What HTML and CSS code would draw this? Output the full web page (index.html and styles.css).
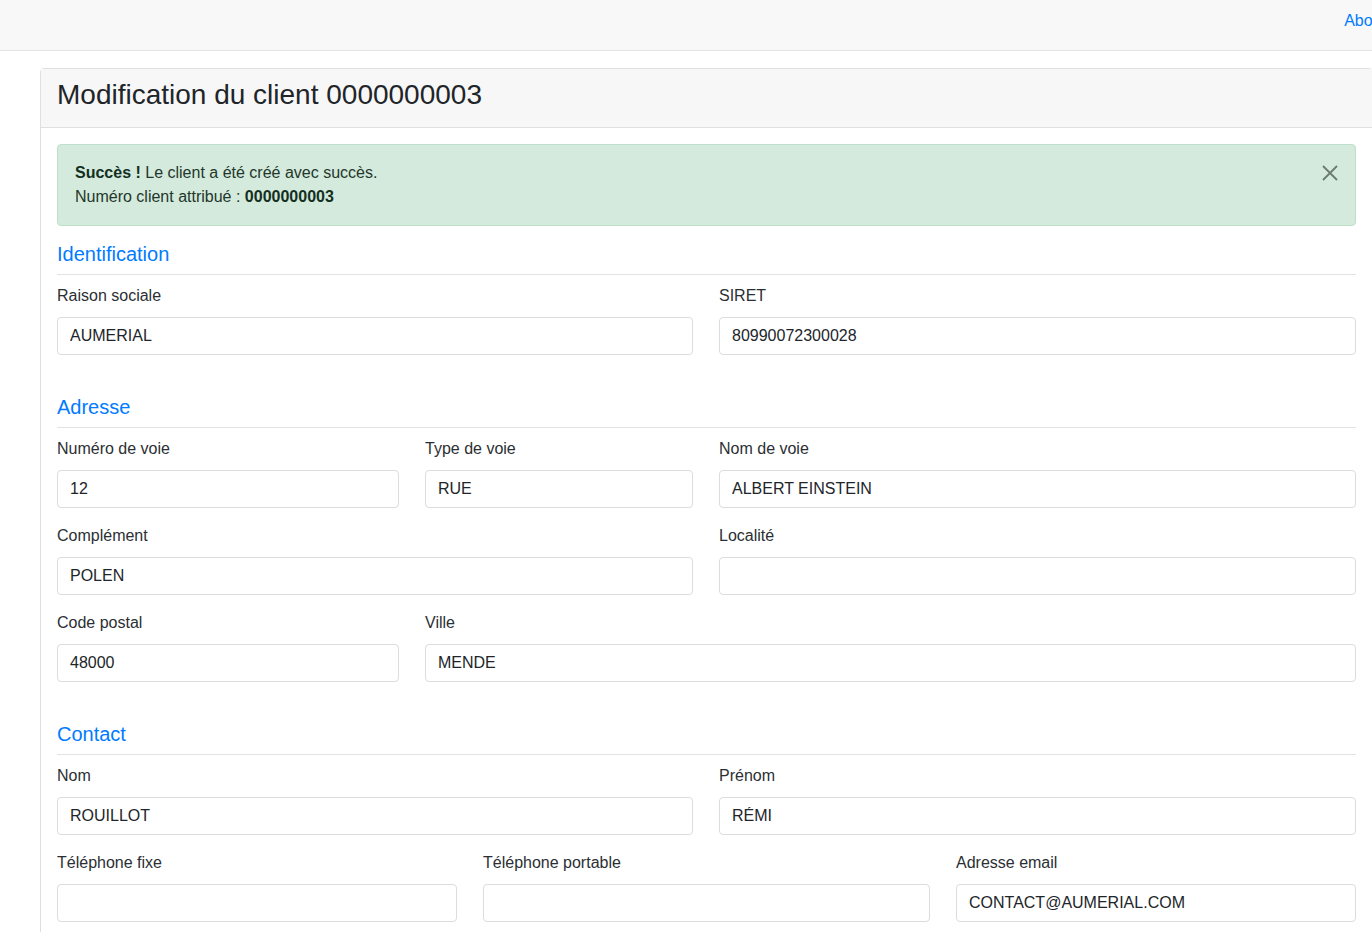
FILE: index.html
```html
<!DOCTYPE html>
<html lang="fr">
<head>
  <meta charset="UTF-8" />
  <meta name="viewport" content="width=device-width, initial-scale=1.0"/>
  <title>Modification du client</title>
  <link rel="stylesheet" href="styles.css">
</head>
<body>
  <nav class="navbar">
    <a class="nav-link" href="#">About</a>
  </nav>

  <div class="card">
    <div class="card-header">
      <h3>Modification du client 0000000003</h3>
    </div>
    <div class="card-body">
      <div class="alert">
        <div class="alert-text">
          <strong>Succès !</strong> Le client a été créé avec succès.<br>
          Numéro client attribué : <strong>0000000003</strong>
        </div>
        <button class="close" type="button" aria-label="Fermer">
          <svg width="18" height="18" viewBox="0 0 18 18">
            <path d="M2 2 L16 16 M16 2 L2 16" stroke="#6c7a70" stroke-width="1.8" fill="none"/>
          </svg>
        </button>
      </div>

      <form id="client-form">
        <!-- Identification -->
        <h5 class="section-title">Identification</h5>
        <hr>
        <div class="row cols-2">
          <div class="form-group">
            <label for="raison_sociale">Raison sociale</label>
            <input type="text" id="raison_sociale" value="AUMERIAL" />
          </div>
          <div class="form-group">
            <label for="siret">SIRET</label>
            <input type="text" id="siret" value="80990072300028" />
          </div>
        </div>

        <!-- Adresse -->
        <h5 class="section-title spaced">Adresse</h5>
        <hr>
        <div class="row cols-voie">
          <div class="form-group">
            <label for="num_voie">Numéro de voie</label>
            <input type="text" id="num_voie" value="12" />
          </div>
          <div class="form-group">
            <label for="type_voie">Type de voie</label>
            <input type="text" id="type_voie" value="RUE" />
          </div>
          <div class="form-group">
            <label for="nom_voie">Nom de voie</label>
            <input type="text" id="nom_voie" value="ALBERT EINSTEIN" />
          </div>
        </div>
        <div class="row cols-2">
          <div class="form-group">
            <label for="complement">Complément</label>
            <input type="text" id="complement" value="POLEN" />
          </div>
          <div class="form-group">
            <label for="localite">Localité</label>
            <input type="text" id="localite" value="" />
          </div>
        </div>
        <div class="row cols-ville">
          <div class="form-group">
            <label for="code_postal">Code postal</label>
            <input type="text" id="code_postal" value="48000" />
          </div>
          <div class="form-group">
            <label for="ville">Ville</label>
            <input type="text" id="ville" value="MENDE" />
          </div>
        </div>

        <!-- Contact -->
        <h5 class="section-title spaced">Contact</h5>
        <hr>
        <div class="row cols-2">
          <div class="form-group">
            <label for="nom">Nom</label>
            <input type="text" id="nom" value="ROUILLOT" />
          </div>
          <div class="form-group">
            <label for="prenom">Prénom</label>
            <input type="text" id="prenom" value="RÉMI" />
          </div>
        </div>
        <div class="row cols-contact">
          <div class="form-group">
            <label for="tel_fixe">Téléphone fixe</label>
            <input type="text" id="tel_fixe" value="" />
          </div>
          <div class="form-group">
            <label for="tel_portable">Téléphone portable</label>
            <input type="text" id="tel_portable" value="" />
          </div>
          <div class="form-group">
            <label for="email">Adresse email</label>
            <input type="text" id="email" value="CONTACT@AUMERIAL.COM" />
          </div>
        </div>
      </form>
    </div>
  </div>
</body>
</html>
```

FILE: styles.css
```css
html, body {
  overflow-x: hidden;
}

body {
  margin: 0;
  font-family: "Liberation Sans", Arial, sans-serif;
  font-size: 16px;
  line-height: 1.5;
  color: #212529;
  background: #fff;
}

.navbar {
  display: flex;
  justify-content: flex-end;
  width: 1402px;
  height: 51px;
  box-sizing: border-box;
  padding: 9px 16px 0;
  background: #f8f8f8;
  border-bottom: 1px solid #e4e4e4;
}

.nav-link {
  height: 24px;
  color: #007bff;
  text-decoration: none;
}

.card {
  width: 1333px;
  box-sizing: border-box;
  margin: 17px 0 0 40px;
  border: 1px solid #dfdfdf;
  border-radius: 4px;
  background: #fff;
}

.card-header {
  padding: 9px 16px 15px;
  background: #f7f7f7;
  border-bottom: 1px solid #dfdfdf;
}

.card-header h3 {
  margin: 0;
  font-size: 28px;
  font-weight: 400;
  line-height: 1.2;
  color: #212529;
}

.card-body {
  padding: 16px;
}

.alert {
  display: flex;
  justify-content: space-between;
  align-items: flex-start;
  padding: 16px 16px 16px 17px;
  margin-bottom: 16px;
  background: #d4eadc;
  border: 1px solid #c0dfca;
  border-radius: 4px;
  color: #23372b;
}

.alert strong {
  color: #13301f;
}

.close {
  display: flex;
  align-items: center;
  justify-content: center;
  width: 18px;
  height: 24px;
  padding: 0;
  border: none;
  background: none;
  cursor: pointer;
}

.section-title {
  margin: 0 0 8px;
  font-size: 20px;
  font-weight: 400;
  line-height: 1.2;
  color: #007bff;
}

.section-title.spaced {
  margin-top: 24px;
}

hr {
  margin: 0 0 9px;
  border: none;
  border-top: 1px solid #e3e3e3;
}

.row {
  display: grid;
  column-gap: 26px;
}

.cols-2 {
  grid-template-columns: 636px 1fr;
}

.cols-voie {
  grid-template-columns: 342px 268px 1fr;
}

.cols-ville {
  grid-template-columns: 342px 1fr;
}

.cols-contact {
  grid-template-columns: 400px 447px 1fr;
}

.form-group {
  margin-bottom: 16px;
}

label {
  display: block;
  margin-bottom: 9px;
  line-height: 24px;
  color: #2b2f33;
}

input {
  display: block;
  width: 100%;
  height: 38px;
  padding: 6px 12px;
  box-sizing: border-box;
  font-family: inherit;
  font-size: 16px;
  color: #212529;
  background: #fff;
  border: 1px solid #dcdcdc;
  border-radius: 4px;
}
```
